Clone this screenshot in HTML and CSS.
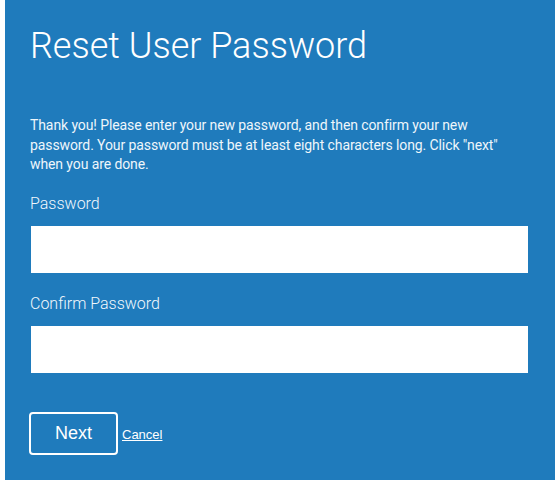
FILE: index.html
```html
<!DOCTYPE html>
<html lang="en">
<head>
<meta charset="utf-8">
<title>Reset User Password</title>
<link rel="stylesheet" href="styles.css">
</head>
<body>
<main class="panel">
  <h1 class="title">Reset User Password</h1>
  <p class="intro">Thank you! Please enter your new password, and then confirm your new password. Your password must be at least eight characters long. Click "next" when you are done.</p>
  <form class="form">
    <label class="label label-first" for="pw">Password</label>
    <input class="field" id="pw" type="password">
    <label class="label" for="pw2">Confirm Password</label>
    <input class="field" id="pw2" type="password">
    <div class="actions">
      <button class="btn" type="button">Next</button>
      <a class="cancel" href="#">Cancel</a>
    </div>
  </form>
</main>
</body>
</html>
```

FILE: styles.css
```css
html, body {
  margin: 0;
  padding: 0;
  background: #ffffff;
}
body {
  padding: 0 3px 0 5px;
}
.panel {
  box-sizing: border-box;
  width: 550px;
  height: 480px;
  background: #1f7bbc;
  padding: 25px 27px 0 24px;
  font-family: Roboto, "Liberation Sans", sans-serif;
  color: #ffffff;
}
.title {
  margin: 0 0 0 1px;
  font-size: 36px;
  line-height: 42px;
  font-weight: 300;
  color: #ffffff;
}
.intro {
  margin: 49px 0 0 1px;
  font-size: 14px;
  line-height: 1.4;
  font-weight: 400;
  letter-spacing: -0.1px;
  color: #eef6fb;
}
.form {
  display: flex;
  flex-direction: column;
  margin: 0;
}
.label {
  display: block;
  margin: 21px 0 12px 1px;
  font-size: 16px;
  line-height: 20px;
  font-weight: 300;
  color: #f2f8fc;
}
.label-first {
  margin-top: 19px;
}
.field {
  box-sizing: border-box;
  display: block;
  margin: 0 0 0 2px;
  width: calc(100% - 2px);
  height: 47px;
  border: none;
  background: #ffffff;
  padding: 0 10px;
  outline: none;
}
.actions {
  display: flex;
  align-items: baseline;
  gap: 4px;
  margin-top: 39px;
  font-family: "Liberation Sans", Arial, sans-serif;
}
.btn {
  box-sizing: border-box;
  width: 89px;
  height: 43px;
  padding: 0;
  border: 2px solid #ffffff;
  border-radius: 4px;
  background: transparent;
  color: #ffffff;
  font-family: "Liberation Sans", Arial, sans-serif;
  font-size: 18px;
  line-height: 39px;
  text-align: center;
}
.cancel {
  color: #ffffff;
  font-size: 13px;
  text-decoration: underline;
}
```
